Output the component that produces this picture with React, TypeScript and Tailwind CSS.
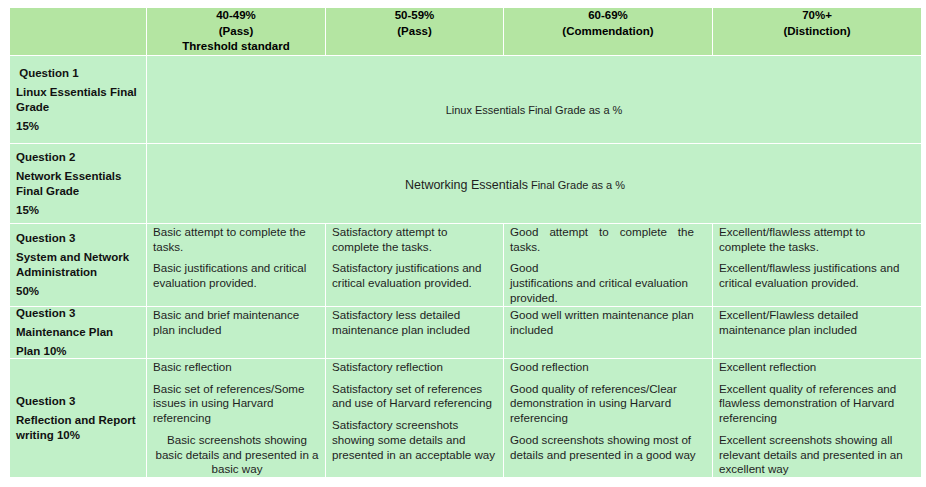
import React from 'react';

type Para = { lines: string[]; center?: boolean };

const headers = [
  ['40-49%', '(Pass)', 'Threshold standard'],
  ['50-59%', '(Pass)'],
  ['60-69%', '(Commendation)'],
  ['70%+', '(Distinction)'],
];

const Lines = ({ lines }: { lines: string[] }) => (
  <>
    {lines.map((l, i) => (
      <React.Fragment key={i}>
        {l}
        {i < lines.length - 1 && <br />}
      </React.Fragment>
    ))}
  </>
);

function Label({ paras }: { paras: string[][] }) {
  return (
    <div className="bg-[#c1f0c8] pl-[6px] flex flex-col justify-center text-[11.5px] font-bold leading-[15px] text-[#111] whitespace-nowrap">
      {paras.map((p, i) => (
        <p key={i} className={i > 0 ? 'mt-[4px]' : ''}>
          <Lines lines={p} />
        </p>
      ))}
    </div>
  );
}

function Cell({ paras }: { paras: Para[] }) {
  return (
    <div className="bg-[#c1f0c8] pl-[6px] pr-[4px] pt-[1px] text-[11.6px] leading-[14.7px] text-[#1e1e1e] whitespace-nowrap">
      {paras.map((p, i) => (
        <p key={i} className={(i > 0 ? 'mt-[7px] ' : '') + (p.center ? 'text-center' : '')}>
          <Lines lines={p.lines} />
        </p>
      ))}
    </div>
  );
}

export default function App() {
  return (
    <div className="w-[926px] h-[487px] bg-white font-['Liberation_Sans',Arial,sans-serif]">
      <div className="ml-[10px] pt-2">
        <div className="grid w-fit grid-cols-[136px_178px_177px_208px_208px] grid-rows-[47px_87px_79px_82px_51px_118px] gap-px bg-white">
          {/* header row */}
          <div className="bg-[#b4e5a2]" />
          {headers.map((h, i) => (
            <div key={i} className="bg-[#b4e5a2] text-center text-[11.5px] font-bold leading-[15.7px] text-black">
              <Lines lines={h} />
            </div>
          ))}

          {/* Question 1 */}
          <Label paras={[['\u00a0Question 1'], ['Linux Essentials Final', 'Grade'], ['15%']]} />
          <div className="col-span-4 bg-[#c1f0c8] pt-[47px] text-center text-[11px] leading-[15px] text-[#1e1e1e]">
            Linux Essentials Final Grade as a %
          </div>

          {/* Question 2 */}
          <Label paras={[['Question 2'], ['Network Essentials', 'Final Grade'], ['15%']]} />
          <div className="col-span-4 bg-[#c1f0c8] flex items-center justify-center pt-[3px] pr-[38px] text-[#1e1e1e] leading-[15px]">
            <span className="text-[12.5px]">Networking Essentials</span>
            <span className="text-[11px] ml-[3px]">Final Grade as a %</span>
          </div>

          {/* Question 3 - system admin */}
          <Label paras={[['Question 3'], ['System and Network', 'Administration'], ['50%']]} />
          <Cell
            paras={[
              { lines: ['Basic attempt to complete the', 'tasks.'] },
              { lines: ['Basic justifications and critical', 'evaluation provided.'] },
            ]}
          />
          <Cell
            paras={[
              { lines: ['Satisfactory attempt to', 'complete the tasks.'] },
              { lines: ['Satisfactory justifications and', 'critical evaluation provided.'] },
            ]}
          />
          <div className="bg-[#c1f0c8] pl-[6px] pr-[4px] pt-[1px] text-[11.6px] leading-[14.7px] text-[#1e1e1e]">
            <p>
              <span className="block w-[184px] text-justify [text-align-last:justify]">Good attempt to complete the</span>
              tasks.
            </p>
            <p className="mt-[7px] whitespace-nowrap">
              Good
              <br />
              justifications and critical evaluation
              <br />
              provided.
            </p>
          </div>
          <Cell
            paras={[
              { lines: ['Excellent/flawless attempt to', 'complete the tasks.'] },
              { lines: ['Excellent/flawless justifications and', 'critical evaluation provided.'] },
            ]}
          />

          {/* Question 3 - maintenance plan */}
          <Label paras={[['Question 3'], ['Maintenance Plan'], ['Plan 10%']]} />
          <Cell paras={[{ lines: ['Basic and brief maintenance', 'plan included'] }]} />
          <Cell paras={[{ lines: ['Satisfactory less detailed', 'maintenance plan included'] }]} />
          <Cell paras={[{ lines: ['Good well written maintenance plan', 'included'] }]} />
          <Cell paras={[{ lines: ['Excellent/Flawless detailed', 'maintenance plan included'] }]} />

          {/* Question 3 - reflection */}
          <Label paras={[['Question 3'], ['Reflection and Report', 'writing 10%']]} />
          <Cell
            paras={[
              { lines: ['Basic reflection'] },
              { lines: ['Basic set of references/Some', 'issues in using Harvard', 'referencing'] },
              { lines: ['Basic screenshots showing', 'basic details and presented in a', 'basic way'], center: true },
            ]}
          />
          <Cell
            paras={[
              { lines: ['Satisfactory reflection'] },
              { lines: ['Satisfactory set of references', 'and use of Harvard referencing'] },
              { lines: ['Satisfactory screenshots', 'showing some details and', 'presented in an acceptable way'] },
            ]}
          />
          <Cell
            paras={[
              { lines: ['Good reflection'] },
              { lines: ['Good quality of references/Clear', 'demonstration in using Harvard', 'referencing'] },
              { lines: ['Good screenshots showing most of', 'details and presented in a good way'] },
            ]}
          />
          <Cell
            paras={[
              { lines: ['Excellent reflection'] },
              { lines: ['Excellent quality of references and', 'flawless demonstration of Harvard', 'referencing'] },
              { lines: ['Excellent screenshots showing all', 'relevant details and presented in an', 'excellent way'] },
            ]}
          />
        </div>
      </div>
    </div>
  );
}
